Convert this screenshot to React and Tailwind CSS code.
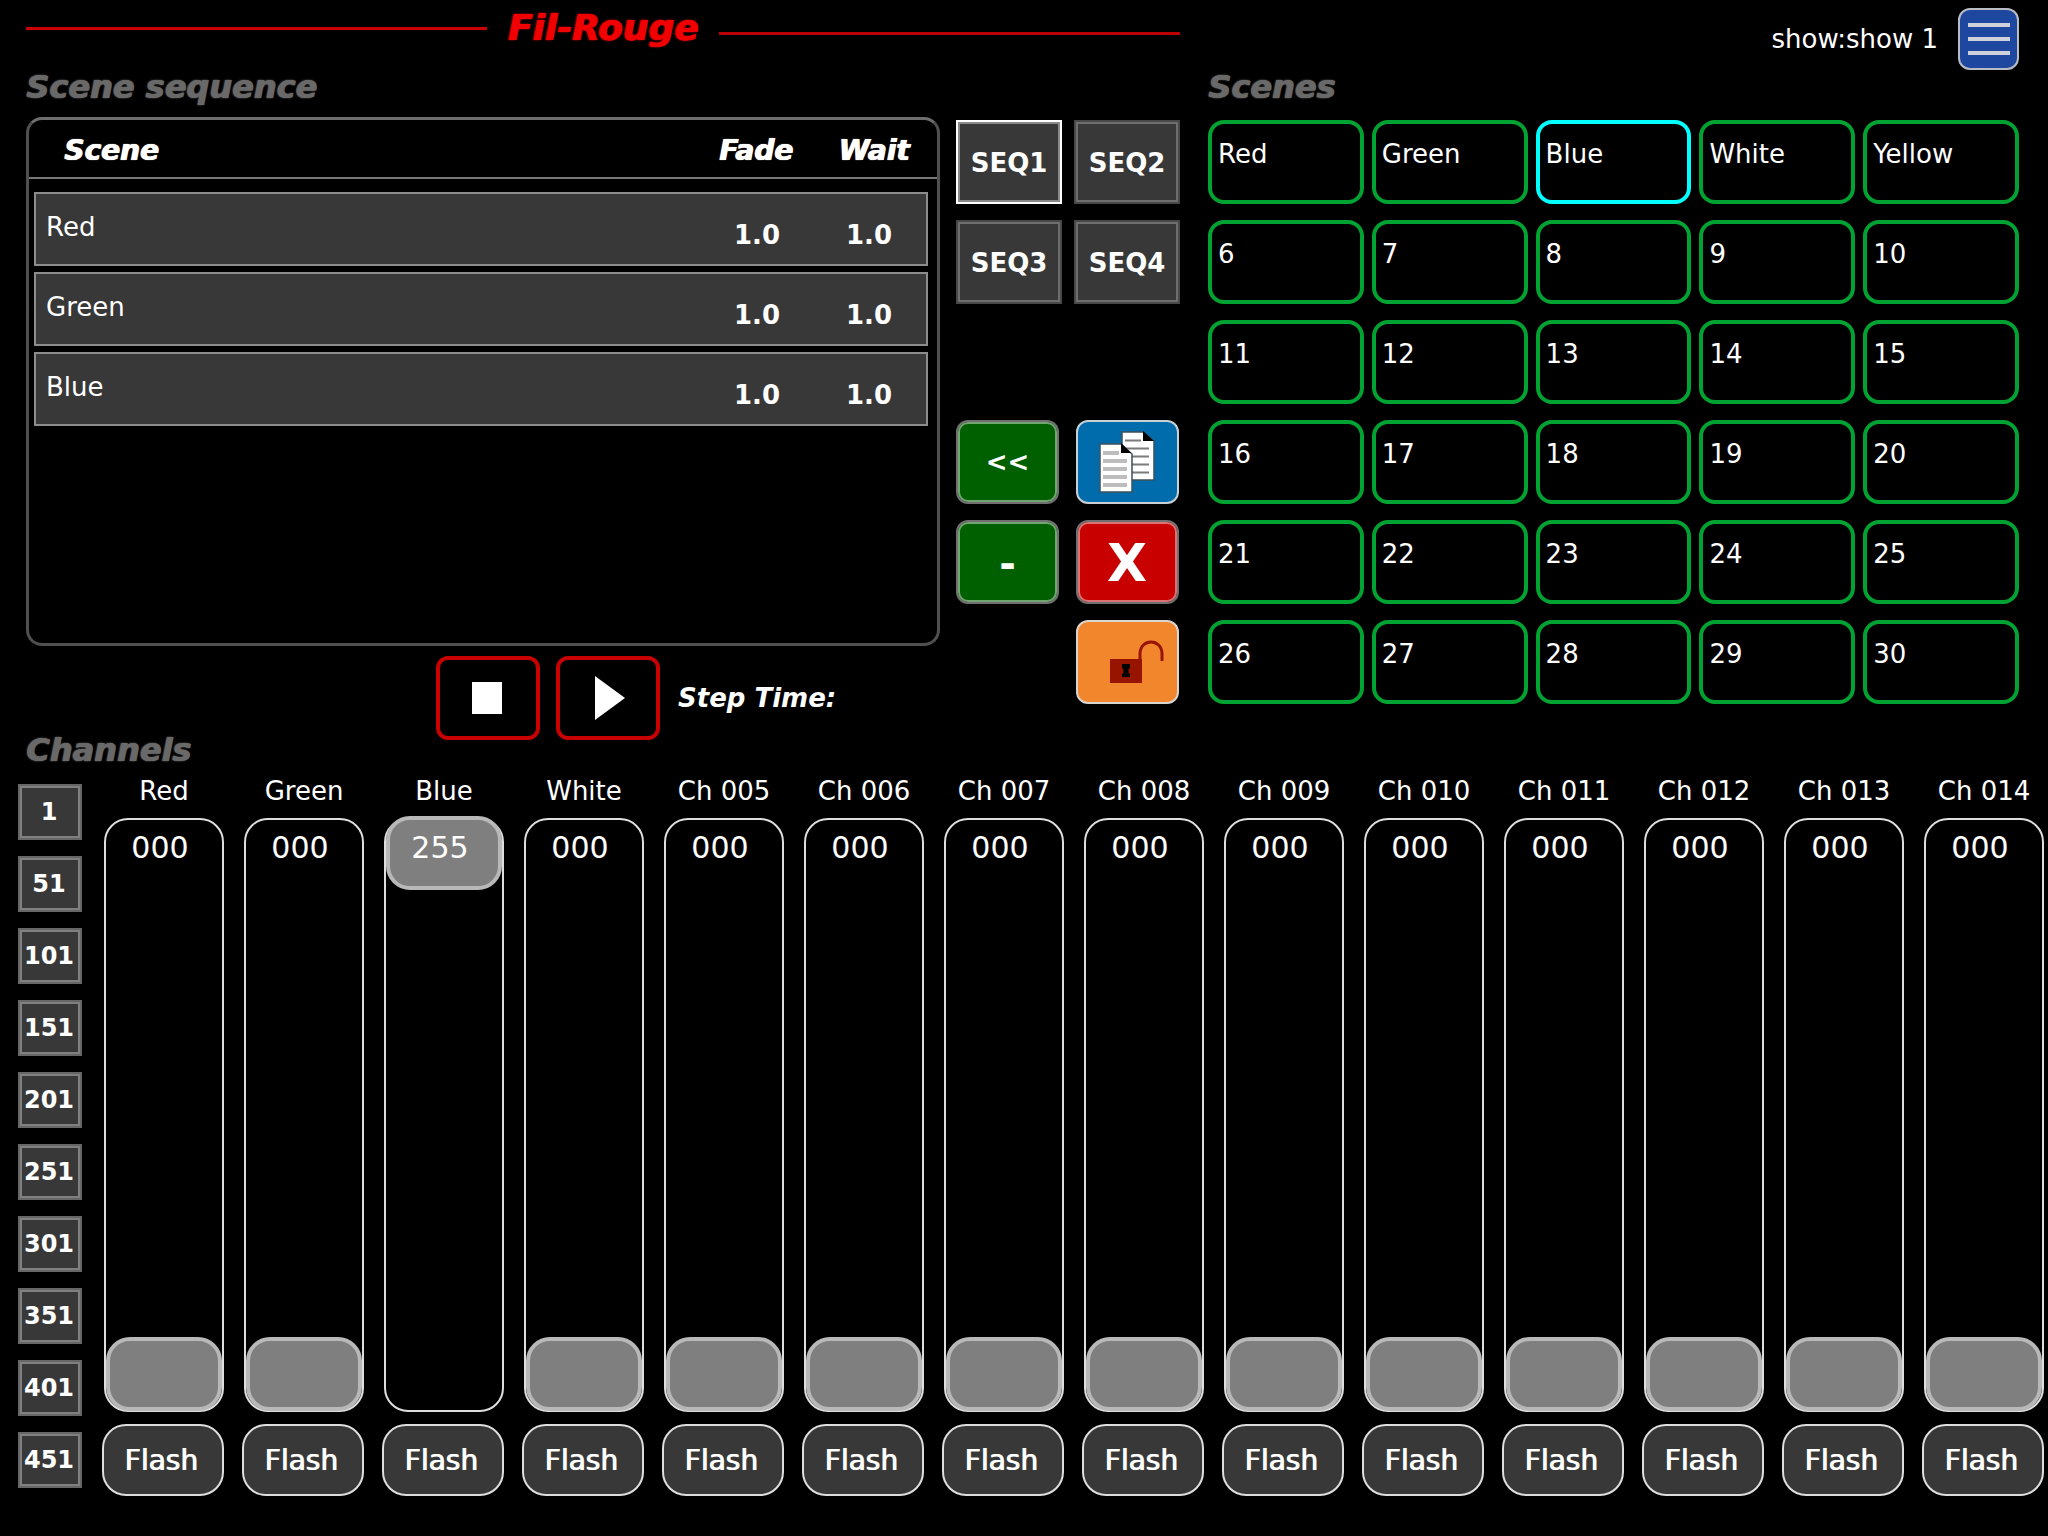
import { useState } from "react";

const STEPS = [
  { name: "Red", fade: "1.0", wait: "1.0" },
  { name: "Green", fade: "1.0", wait: "1.0" },
  { name: "Blue", fade: "1.0", wait: "1.0" },
];

const SEQUENCES = ["SEQ1", "SEQ2", "SEQ3", "SEQ4"];

const NAMED_SCENES = ["Red", "Green", "Blue", "White", "Yellow"];
const SCENES = Array.from({ length: 30 }, (_, i) => NAMED_SCENES[i] || `${i + 1}`);

const NAMED_CHANNELS = ["Red", "Green", "Blue", "White"];
const CHANNELS = Array.from(
  { length: 14 },
  (_, i) => NAMED_CHANNELS[i] || `Ch ${String(i + 1).padStart(3, "0")}`
);

const PAGES = Array.from({ length: 10 }, (_, i) => i * 50 + 1);

function SectionTitle({ children }) {
  return (
    <h2 className="text-[32px] leading-6 font-bold italic whitespace-nowrap text-[#696969] [text-shadow:0_0_2px,1px_0]">
      {children}
    </h2>
  );
}

function CopyIcon() {
  return (
    <svg width="56" height="62" viewBox="0 0 56 62" aria-hidden="true">
      <path d="M23 1H44L55 10V49H23Z" fill="#fff" stroke="#3d4f5c" strokeWidth="1.5" />
      <path d="M44 0V10H55Z" fill="#000" />
      <path d="M26 9.5H42M26 17.5H50M26 25.5H50M26 33.5H50M26 41.5H50" stroke="#7b7b7b" strokeWidth="2" />
      <path d="M1 13H22L33 23V61H1Z" fill="#fff" stroke="#3d4f5c" strokeWidth="1.5" />
      <path d="M22 12V22H32Z" fill="#000" />
      <path d="M4 22H20M4 30H28M4 38H28M4 46H28M4 54H28" stroke="#bdbdbd" strokeWidth="4" />
    </svg>
  );
}

function LockIcon() {
  return (
    <svg width="54" height="44" viewBox="0 0 54 44" aria-hidden="true">
      <path d="M30 20V14C30 -2 52 -2 52 14V21" fill="none" stroke="#971400" strokeWidth="3" />
      <rect x="0" y="19" width="32" height="24" fill="#971400" />
      <path d="M12 24H20V28L18.5 29V33L20 34V37H12V34L13.5 33V29L12 28Z" fill="#000" />
    </svg>
  );
}

function Header() {
  return (
    <header className="grid h-[75px] grid-cols-[1154fr_811fr] gap-7">
      <div className="flex items-start gap-[21px]">
        <hr className="mt-[27px] flex-1 border-0 border-t-3 border-[#cc0000]" />
        <h1 className="mt-2 text-4xl leading-10 font-bold italic text-[#f00000] [text-shadow:0_0_2px,1px_0]">
          Fil-Rouge
        </h1>
        <hr className="mt-8 flex-1 border-0 border-t-3 border-[#bb0000]" />
      </div>
      <div className="flex items-start justify-end gap-5 pt-2">
        <span className="mt-[17px] text-[26px] leading-7">show:show 1</span>
        <button
          type="button"
          aria-label="Menu"
          className="flex h-[62px] w-[61px] flex-col items-center justify-center gap-2.5 rounded-xl border-2 border-[#b9bcc4] bg-[#1e489f]"
        >
          <span className="h-1 w-[42px] bg-[#cfd2da]"></span>
          <span className="h-1 w-[42px] bg-[#cfd2da]"></span>
          <span className="h-1 w-[42px] bg-[#cfd2da]"></span>
        </button>
      </div>
    </header>
  );
}

function SequencePanel() {
  return (
    <section>
      <SectionTitle>Scene sequence</SectionTitle>
      <div className="mt-[18px] h-[529px] rounded-2xl border-3 border-[#505050] border-t-[#6e6e6e]">
        <table className="block">
          <thead className="block border-b-2 border-[#777]">
            <tr className="grid h-[57px] grid-cols-[1fr_118px_118px] items-center pt-1 pr-1 pl-[35px] text-[28px] font-bold italic [text-shadow:0_0_1px,1px_0]">
              <th className="text-left">Scene</th>
              <th>Fade</th>
              <th>Wait</th>
            </tr>
          </thead>
          <tbody className="mt-[13px] flex flex-col gap-1.5 pr-[9px] pl-[5px]">
            {STEPS.map((step) => (
              <tr
                key={step.name}
                className="grid h-[74px] grid-cols-[1fr_112px_112px] border-2 border-[#8c8c8c] bg-[#383838] pr-px text-[26px] leading-7"
              >
                <td className="pt-[19px] pl-2.5">{step.name}</td>
                <td className="pt-[27px] text-center font-bold">{step.fade}</td>
                <td className="pt-[27px] text-center font-bold">{step.wait}</td>
              </tr>
            ))}
          </tbody>
        </table>
      </div>

      <div className="mt-2.5 flex items-center gap-4 pl-[410px]">
        <button
          type="button"
          aria-label="Stop"
          className="flex h-[84px] w-26 items-center justify-center rounded-xl border-4 border-[#c80000] pr-0.5"
        >
          <svg width="30" height="34" viewBox="0 0 30 34" aria-hidden="true">
            <path d="M0 1H30V33H0Z" fill="#fff" />
          </svg>
        </button>
        <button
          type="button"
          aria-label="Play"
          className="flex h-[84px] w-26 items-center justify-center rounded-xl border-4 border-[#c80000] pl-1"
        >
          <svg width="32" height="46" viewBox="0 0 32 46" aria-hidden="true">
            <path d="M1 1L31 23L1 45Z" fill="#fff" />
          </svg>
        </button>
        <span className="pl-0.5 text-[26px] leading-7 font-bold italic">Step Time:</span>
      </div>
    </section>
  );
}

function Controls() {
  const [active, setActive] = useState("SEQ1");

  return (
    <section
      aria-label="Sequence controls"
      className="mt-[45px] grid grid-cols-2 grid-rows-[repeat(6,84px)] gap-x-3 gap-y-4 self-start font-bold"
    >
      {SEQUENCES.map((seq) => (
        <button
          key={seq}
          type="button"
          onClick={() => setActive(seq)}
          className={
            seq === active
              ? "border-2 border-white bg-[#383838] pt-0.5 text-[26px] inset-ring-2 inset-ring-[#8a8a8a]"
              : "border-2 border-[#484848] bg-[#383838] pt-0.5 text-[26px] inset-ring-2 inset-ring-[#6e6e6e]"
          }
        >
          {seq}
        </button>
      ))}
      <button
        type="button"
        className="row-start-4 w-[103px] rounded-xl border-2 border-[#707070] bg-[#006000] text-[26px] inset-ring-2 inset-ring-[#72a572]"
      >
        &lt;&lt;
      </button>
      <button
        type="button"
        aria-label="Copy"
        className="row-start-4 flex w-[103px] items-center justify-center justify-self-center rounded-xl border-2 border-[#c8d0d6] bg-[#006cab]"
      >
        <CopyIcon />
      </button>
      <button
        type="button"
        className="row-start-5 w-[103px] rounded-xl border-2 border-[#707070] bg-[#006000] pt-1 text-[40px] leading-none inset-ring-2 inset-ring-[#72a572]"
      >
        -
      </button>
      <button
        type="button"
        className="row-start-5 w-[103px] justify-self-center rounded-xl border-2 border-[#707070] bg-[#c80000] pt-0.5 text-[52px] leading-none inset-ring-2 inset-ring-[#dc7272]"
      >
        X
      </button>
      <button
        type="button"
        aria-label="Unlock"
        className="col-start-2 row-start-6 flex w-[103px] items-center justify-center justify-self-center rounded-xl border-2 border-[#d8d4d0] bg-[#f2862c] pl-5"
      >
        <LockIcon />
      </button>
    </section>
  );
}

function Scenes() {
  const [selected, setSelected] = useState(2);

  return (
    <section className="pl-3">
      <SectionTitle>Scenes</SectionTitle>
      <div className="mt-[21px] grid auto-rows-[84px] grid-cols-5 gap-x-2 gap-y-4">
        {SCENES.map((scene, i) => (
          <button
            key={scene}
            type="button"
            onClick={() => setSelected(i)}
            className={
              i === selected
                ? "rounded-2xl border-4 border-[#00ffff] pb-4 pl-1.5 text-left text-[26px] leading-7"
                : "rounded-2xl border-4 border-[#00a331] pb-4 pl-1.5 text-left text-[26px] leading-7"
            }
          >
            {scene}
          </button>
        ))}
      </div>
    </section>
  );
}

function Channel({ name, initial }) {
  const [level, setLevel] = useState(initial);
  const id = `level-${name.replace(" ", "-")}`;

  return (
    <div className="flex flex-col">
      <div className="flex flex-col pl-0.5">
        <label htmlFor={id} className="text-center text-[26px] leading-7 whitespace-nowrap">
          {name}
        </label>
        <div className="mt-[13px] grid h-[594px] rounded-3xl border-2 border-[#dedede]">
          <input
            id={id}
            type="range"
            min="0"
            max="255"
            value={level}
            onChange={(e) => setLevel(Number(e.target.value))}
            className="col-start-1 row-start-1 -mt-1 h-[595px] w-full appearance-none bg-transparent [direction:rtl] [writing-mode:vertical-lr] [&::-webkit-slider-runnable-track]:w-full [&::-webkit-slider-thumb]:h-[74px] [&::-webkit-slider-thumb]:w-full [&::-webkit-slider-thumb]:appearance-none [&::-webkit-slider-thumb]:rounded-3xl [&::-webkit-slider-thumb]:border-4 [&::-webkit-slider-thumb]:border-[#b8b8b8] [&::-webkit-slider-thumb]:bg-[#7f7f7f]"
          />
          <output
            htmlFor={id}
            className="pointer-events-none col-start-1 row-start-1 mt-2.5 h-9 pr-2 text-center text-3xl leading-9"
          >
            {String(level).padStart(3, "0")}
          </output>
        </div>
      </div>
      <button
        type="button"
        className="mt-3 h-18 rounded-3xl border-2 border-[#dedede] bg-[#383838] pt-0.5 pr-1 text-[28px] [text-shadow:1px_0]"
      >
        Flash
      </button>
    </div>
  );
}

function Channels() {
  return (
    <section className="-mt-0.5">
      <div className="pl-[26px]">
        <SectionTitle>Channels</SectionTitle>
      </div>
      <div className="mt-[15px] flex gap-5 pr-1 pl-[18px]">
        <nav aria-label="Channel pages" className="mt-[7px] flex w-16 flex-col gap-4">
          {PAGES.map((page) => (
            <button
              key={page}
              type="button"
              className="h-14 border-2 border-[#666] bg-[#383838] pr-0.5 text-2xl font-bold inset-ring-2 inset-ring-[#808080]"
            >
              {page}
            </button>
          ))}
        </nav>
        <div className="grid flex-1 grid-cols-14 gap-[18px]">
          {CHANNELS.map((name) => (
            <Channel key={name} name={name} initial={name === "Blue" ? 255 : 0} />
          ))}
        </div>
      </div>
    </section>
  );
}

function App() {
  return (
    <div className="min-h-screen bg-black font-['DejaVu_Sans',Verdana,sans-serif] text-white">
      <div className="pr-[29px] pl-[26px]">
        <Header />
        <main className="grid grid-cols-[914fr_224px_823fr] gap-4">
          <SequencePanel />
          <Controls />
          <Scenes />
        </main>
      </div>
      <Channels />
    </div>
  );
}

export default App;
